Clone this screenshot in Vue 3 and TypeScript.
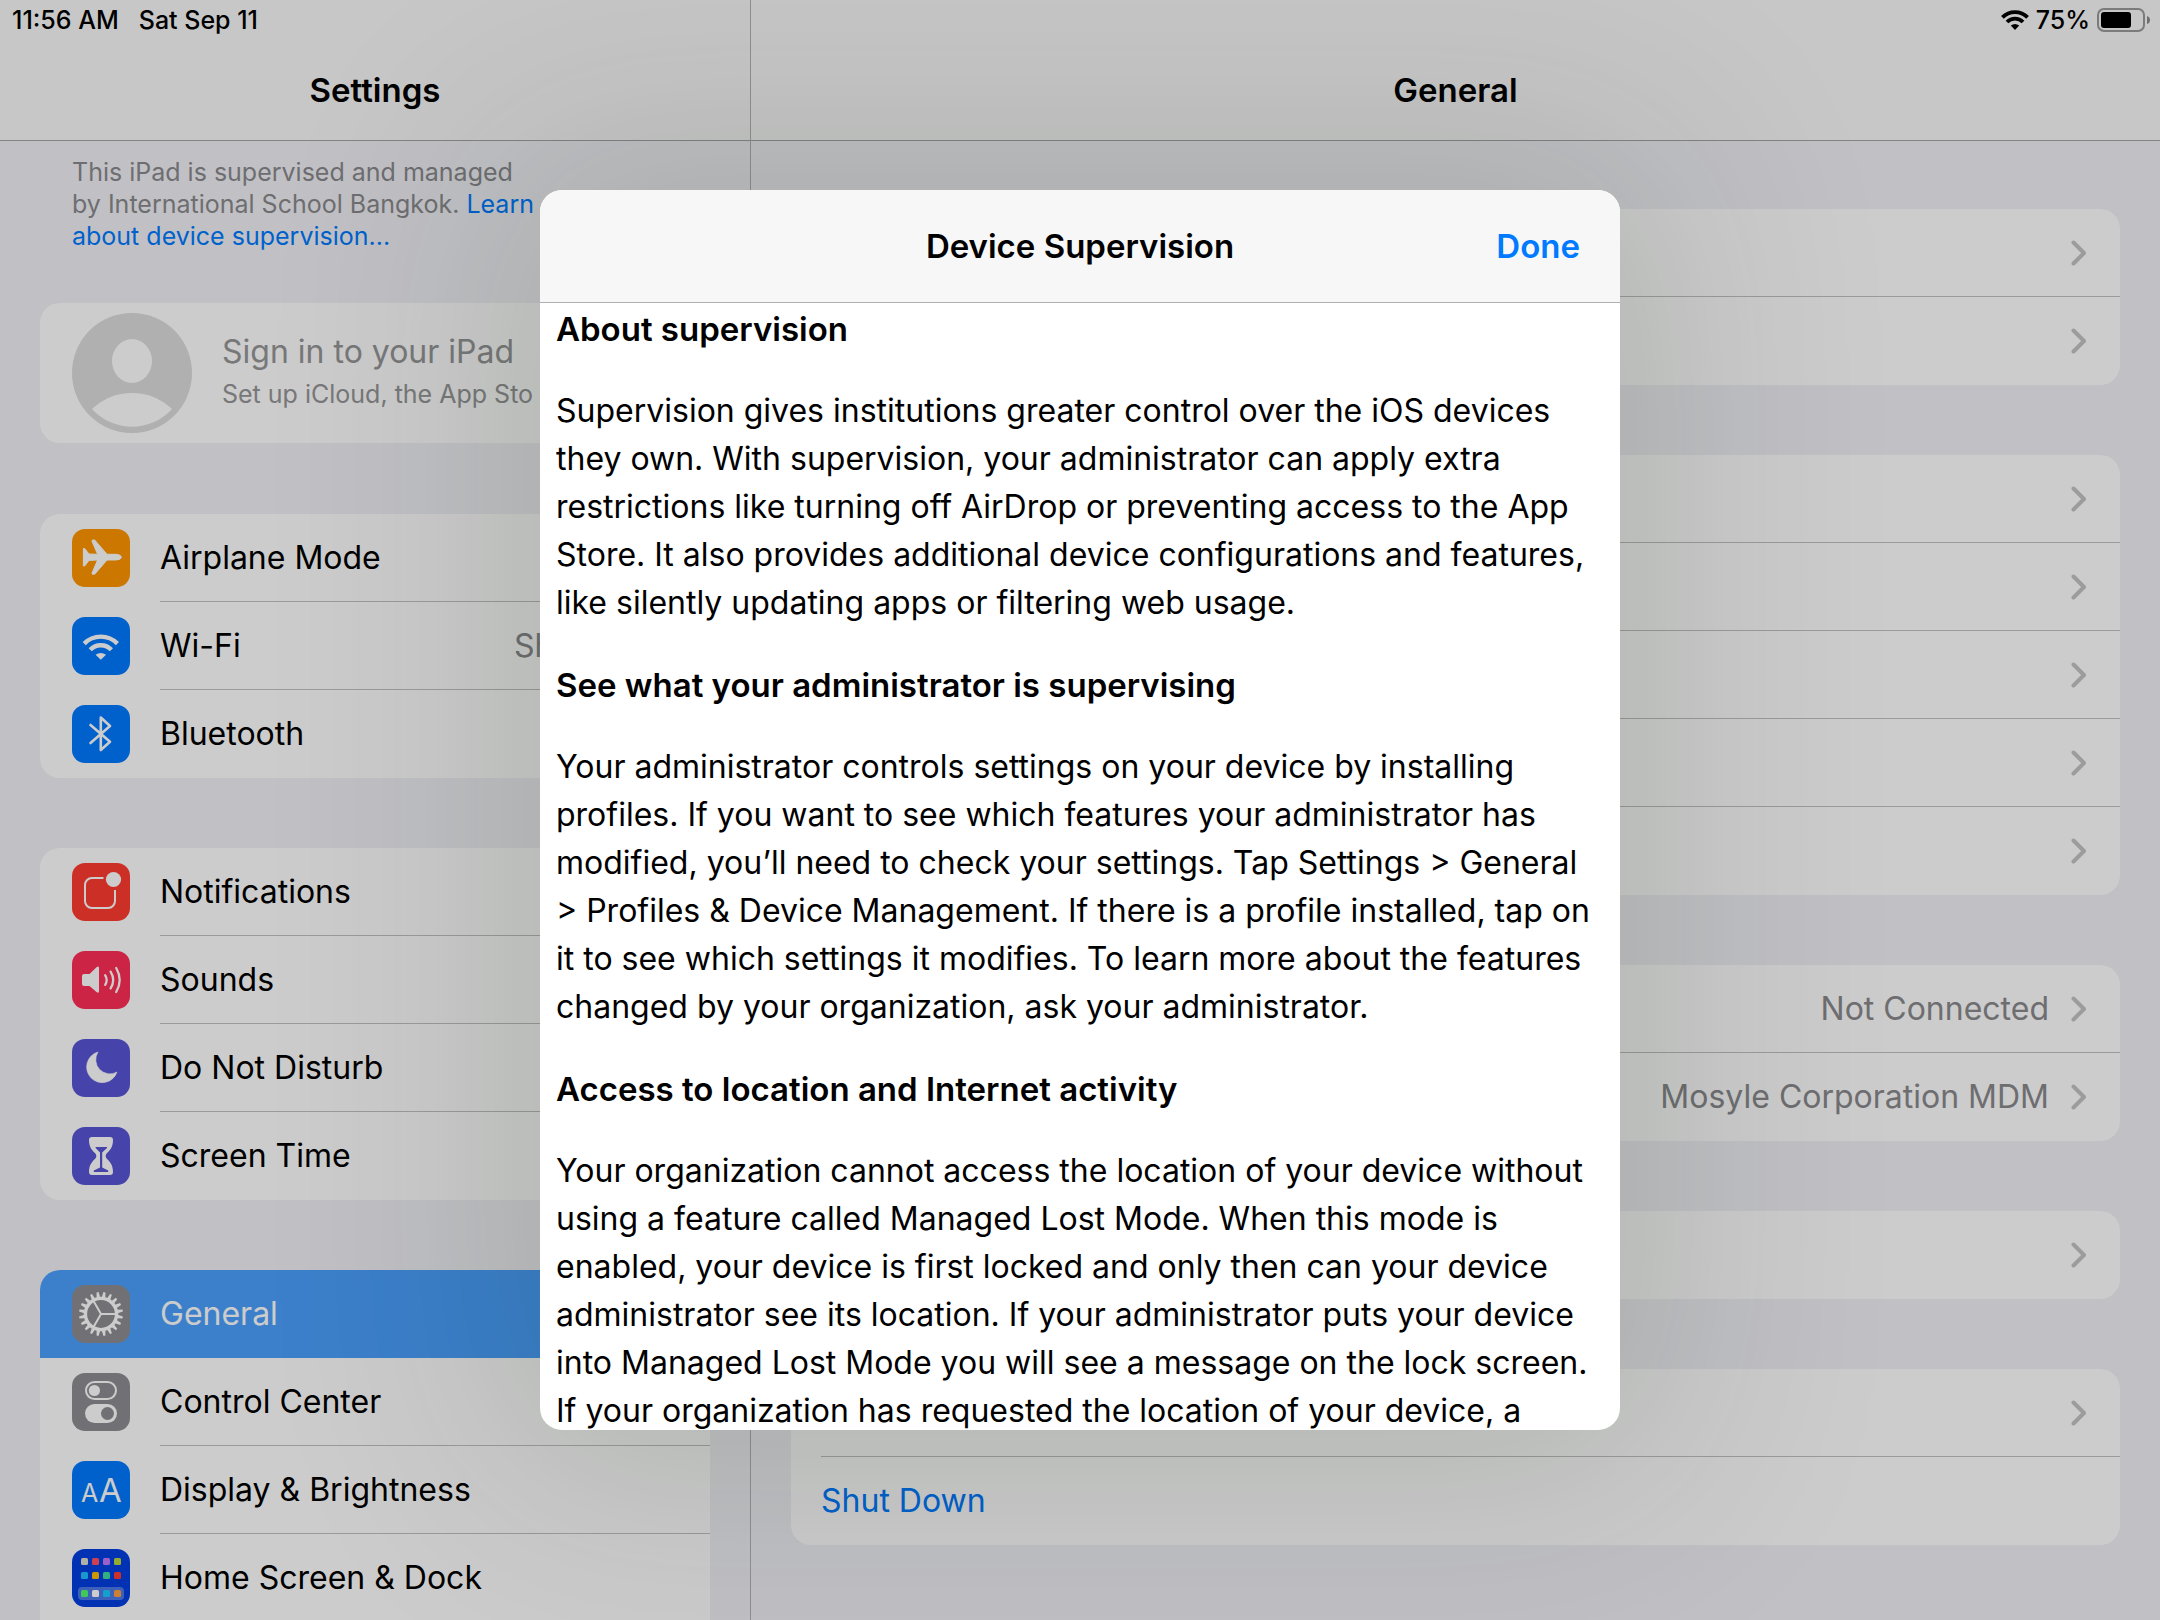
<script setup lang="ts">
interface SidebarItem {
  label: string
  icon: string
  color: string
  value?: string
  selected?: boolean
}

interface DetailRow {
  value?: string
  label?: string
  action?: boolean
}

interface Section {
  title: string
  lines: string[]
}

const sidebarGroups: SidebarItem[][] = [
  [
    { label: 'Airplane Mode', icon: 'airplane', color: '#ff9500' },
    { label: 'Wi-Fi', icon: 'wifi', color: '#007aff', value: 'Sh' },
    { label: 'Bluetooth', icon: 'bluetooth', color: '#007aff' },
  ],
  [
    { label: 'Notifications', icon: 'notifications', color: '#ff3b30' },
    { label: 'Sounds', icon: 'sounds', color: '#ff2d55' },
    { label: 'Do Not Disturb', icon: 'moon', color: '#5856d6' },
    { label: 'Screen Time', icon: 'hourglass', color: '#5856d6' },
  ],
  [
    { label: 'General', icon: 'gear', color: '#8e8e93', selected: true },
    { label: 'Control Center', icon: 'control', color: '#8e8e93' },
    { label: 'Display & Brightness', icon: 'display', color: '#007aff' },
    { label: 'Home Screen & Dock', icon: 'home', color: '#003fe0' },
  ],
]

const detailGroups: DetailRow[][] = [
  [{}, {}],
  [{}, {}, {}, {}, {}],
  [{ value: 'Not Connected' }, { value: 'Mosyle Corporation MDM' }],
  [{}],
  [{}, { label: 'Shut Down', action: true }],
]

const sections: Section[] = [
  {
    title: 'About supervision',
    lines: [
      'Supervision gives institutions greater control over the iOS devices',
      'they own. With supervision, your administrator can apply extra',
      'restrictions like turning off AirDrop or preventing access to the App',
      'Store. It also provides additional device configurations and features,',
      'like silently updating apps or filtering web usage.',
    ],
  },
  {
    title: 'See what your administrator is supervising',
    lines: [
      'Your administrator controls settings on your device by installing',
      'profiles. If you want to see which features your administrator has',
      'modified, you’ll need to check your settings. Tap Settings > General',
      '> Profiles & Device Management. If there is a profile installed, tap on',
      'it to see which settings it modifies. To learn more about the features',
      'changed by your organization, ask your administrator.',
    ],
  },
  {
    title: 'Access to location and Internet activity',
    lines: [
      'Your organization cannot access the location of your device without',
      'using a feature called Managed Lost Mode. When this mode is',
      'enabled, your device is first locked and only then can your device',
      'administrator see its location. If your administrator puts your device',
      'into Managed Lost Mode you will see a message on the lock screen.',
      'If your organization has requested the location of your device, a',
    ],
  },
]

const gearTeeth = Array.from({ length: 20 }, (_, i) => i * 18)

const homeApps = [
  { x: 9, y: 9, fill: '#dcdcd2' },
  { x: 20, y: 9, fill: '#ff5064' },
  { x: 31, y: 9, fill: '#c078ff' },
  { x: 42, y: 9, fill: '#b8d83c' },
  { x: 9, y: 23, fill: '#1ebeff' },
  { x: 20, y: 23, fill: '#ffbf00' },
  { x: 31, y: 23, fill: '#3cdca0' },
  { x: 42, y: 23, fill: '#ff3c32' },
  { x: 9, y: 41, fill: '#50fa6e' },
  { x: 20, y: 41, fill: '#ffffff' },
  { x: 31, y: 41, fill: '#19c8ff' },
  { x: 42, y: 41, fill: '#ffa040' },
]
</script>

<template>
  <div class="screen">
    <aside class="sidebar">
      <header class="bar">
        <div class="status">
          <span>11:56 AM</span>
          <span>Sat Sep 11</span>
        </div>
        <h1 class="bar-title">Settings</h1>
      </header>

      <div class="sidebar-body">
        <p class="supervised">
          This iPad is supervised and managed<br />by International School Bangkok.
          <a href="#supervision">Learn<br />about device supervision...</a>
        </p>

        <a class="card account" href="#account">
          <svg class="avatar" viewBox="0 0 120 120" aria-hidden="true">
            <circle cx="60" cy="60" r="60" fill="#dcdcdc" />
            <ellipse cx="60" cy="48" rx="20" ry="22" fill="#fff" />
            <path d="M20 96Q37 80 60 80Q83 80 100 96A54 54 0 0 1 20 96Z" fill="#fff" />
          </svg>
          <span class="account-text">
            <span class="account-name">Sign in to your iPad</span>
            <span class="account-sub">Set up iCloud, the App Sto</span>
          </span>
        </a>

        <nav v-for="(group, g) in sidebarGroups" :key="g" class="card">
          <a
            v-for="item in group"
            :key="item.label"
            href="#"
            class="row side-row"
            :class="{ selected: item.selected }"
          >
            <svg class="icon" viewBox="0 0 58 58" aria-hidden="true">
              <rect width="58" height="58" rx="13" :fill="item.color" />
              <path
                v-if="item.icon === 'airplane'"
                d="M11.4 19.5H12.6L17 25L25.6 25.3L20 12.2Q19.6 11 21 11H22.7L35 25.3H44Q49.4 25.8 49.4 28.2Q49.4 30.6 44 31H35L22.7 45.2H21Q19.6 45.2 20 44L25.6 31L17 31.4L12.6 37H11.4Z"
                fill="#fff" stroke="#fff" stroke-width="1" stroke-linejoin="round"
              />
              <g v-else-if="item.icon === 'wifi'" fill="none" stroke="#fff" stroke-width="4.4">
                <path d="M12.2 26.6A23.3 23.3 0 0 1 45.4 26.6" />
                <path d="M18.2 32.8A14.7 14.7 0 0 1 39.4 32.8" />
                <path d="M23.6 37.8Q28.8 34 34 37.8L28.8 42.8Z" fill="#fff" stroke="none" />
              </g>
              <path
                v-else-if="item.icon === 'bluetooth'"
                d="M18.5 20L38 36.8L28.8 45V12.5L38 21L18.5 38"
                fill="none" stroke="#fff" stroke-width="2.6" stroke-linecap="round" stroke-linejoin="round"
              />
              <g v-else-if="item.icon === 'notifications'">
                <path
                  d="M31.5 15H20A7 7 0 0 0 13 22V38A7 7 0 0 0 20 45H36A7 7 0 0 0 43 38V27"
                  fill="none" stroke="#fff" stroke-width="2"
                />
                <circle cx="41.5" cy="16.5" r="7.6" fill="#fff" />
              </g>
              <g v-else-if="item.icon === 'sounds'" fill="none" stroke="#fff" stroke-width="2.3" stroke-linecap="round">
                <path
                  d="M12 23H17.5L24.8 16Q27 14.8 27 17V40Q27 42.6 24.8 41.2L17.5 35H12Q10 35 10 33V25Q10 23 12 23Z"
                  fill="#fff" stroke="none"
                />
                <path d="M33.2 24.3Q36.2 29 33.2 33.8" />
                <path d="M38.6 20.6Q43.8 29 38.6 37.4" />
                <path d="M44.2 17Q51.2 29 44.2 41" />
              </g>
              <path
                v-else-if="item.icon === 'moon'"
                d="M26 13A15.6 15.6 0 1 0 45 33A14.2 14.2 0 0 1 26 13Z"
                fill="#fff" stroke="#fff" stroke-width="0.6" stroke-linejoin="round"
              />
              <g v-else-if="item.icon === 'hourglass'">
                <path
                  d="M20 10H38Q41 10 41 13C41 21 37 24 34.2 27Q33 29 34.2 31C37 34 41 37 41 45Q41 48 38 48H20Q17 48 17 45C17 37 21 34 23.8 31Q25 29 23.8 27C21 24 17 21 17 13Q17 10 20 10Z"
                  fill="#fff"
                />
                <path
                  d="M23.6 20H35V21L30.2 25.5V40.6L36.2 43.6V45H21.8V43.6L28 40.6V25.5L23.6 21Z"
                  :fill="item.color"
                />
              </g>
              <g v-else-if="item.icon === 'gear'" fill="#fff">
                <path
                  v-for="angle in gearTeeth"
                  :key="angle"
                  d="M27.2 12.4L28 7H30L30.8 12.4Z"
                  :transform="`rotate(${angle + 9} 29 29)`"
                />
                <circle cx="29" cy="29" r="15.6" fill="none" stroke="#fff" stroke-width="3.4" />
                <path
                  d="M29 29H44M29 29L21.5 16M29 29L21.5 42"
                  stroke="#fff" stroke-width="2"
                />
              </g>
              <g v-else-if="item.icon === 'control'">
                <rect x="14" y="9" width="30" height="17" rx="8.5" fill="none" stroke="#fff" stroke-width="2" />
                <circle cx="22.4" cy="17.5" r="5.6" fill="#fff" />
                <rect x="13" y="31" width="32" height="19" rx="9.5" fill="#fff" />
                <circle cx="35.5" cy="40.5" r="6.5" :fill="item.color" />
              </g>
              <g v-else-if="item.icon === 'display'" fill="#fff">
                <text x="9" y="41" font-size="25">A</text>
                <text x="27" y="41" font-size="33">A</text>
              </g>
              <g v-else-if="item.icon === 'home'">
                <rect x="6" y="38" width="46" height="13" rx="4" fill="#fff" fill-opacity="0.3" />
                <rect
                  v-for="app in homeApps"
                  :key="`${app.x}-${app.y}`"
                  :x="app.x" :y="app.y" width="7" height="7" rx="1.5" :fill="app.fill"
                />
              </g>
            </svg>
            <span class="row-main">
              <span class="row-label">{{ item.label }}</span>
              <span v-if="item.value" class="row-value">{{ item.value }}</span>
            </span>
          </a>
        </nav>
      </div>
    </aside>

    <main class="detail">
      <header class="bar">
        <div class="status status-right">
          <svg class="status-wifi" viewBox="0 0 28 20" aria-hidden="true">
            <g fill="none" stroke="#000" stroke-width="3.8">
              <path d="M1.4 7.4A17.8 17.8 0 0 1 26.6 7.4" />
              <path d="M6 12A11.3 11.3 0 0 1 22 12" />
            </g>
            <path d="M9.8 15.6Q14 12.2 18.2 15.6L14 20Z" />
          </svg>
          <span class="percent">75%</span>
          <svg class="battery" viewBox="0 0 54 24" aria-hidden="true">
            <rect x="1" y="1" width="46" height="22" rx="6" fill="none" stroke="#9a9a9a" stroke-width="2" />
            <rect x="4" y="4" width="30" height="16" rx="3" />
            <path d="M50 8Q53 9 53 12Q53 15 50 16Z" fill="#8c8c8c" />
          </svg>
        </div>
        <h1 class="bar-title">General</h1>
      </header>

      <div class="detail-body">
        <section v-for="(group, g) in detailGroups" :key="g" class="card">
          <component
            :is="row.action ? 'button' : 'a'"
            v-for="(row, r) in group"
            :key="r"
            class="row detail-row"
            :href="row.action ? undefined : '#'"
          >
            <span class="row-main">
              <span v-if="row.label" class="row-label action">{{ row.label }}</span>
              <span v-if="row.value" class="row-value">{{ row.value }}</span>
              <svg v-if="!row.action" class="chevron" viewBox="0 0 16 26" aria-hidden="true">
                <path d="M2.5 2.5L13 13L2.5 23.5" />
              </svg>
            </span>
          </component>
        </section>
      </div>
    </main>

    <div class="backdrop">
      <div class="modal" role="dialog" aria-labelledby="modal-title">
        <header class="modal-bar">
          <h2 id="modal-title" class="modal-title">Device Supervision</h2>
          <button class="done" type="button">Done</button>
        </header>
        <div class="modal-body">
          <template v-for="section in sections" :key="section.title">
            <h3>{{ section.title }}</h3>
            <p><span v-for="line in section.lines" :key="line" class="line">{{ line }}</span></p>
          </template>
        </div>
      </div>
    </div>
  </div>
</template>

<style>
body {
  margin: 0;
  overflow: hidden;
}
</style>

<style scoped>
.screen {
  position: relative;
  display: flex;
  height: 100vh;
  overflow: hidden;
  background: #f2f2f7;
  color: #000;
  font-family: Inter, "Liberation Sans", sans-serif;
  font-size: 32px;
  line-height: 48px;
}

a {
  color: inherit;
  text-decoration: none;
}

h1,
h2,
h3,
p {
  margin: 0;
}

h1,
h2,
h3 {
  font-size: 33px;
  font-weight: 600;
}

.sidebar {
  flex: none;
  width: 750px;
  border-right: 1px solid #b4b4b6;
}

.detail {
  flex: 1;
  min-width: 0;
}

.bar {
  box-sizing: border-box;
  height: 141px;
  border-bottom: 1px solid #a4a4a6;
  background: #f9f9f9;
}

.status {
  display: flex;
  align-items: center;
  gap: 20px;
  height: 40px;
  padding: 0 9px 0 12px;
  font-size: 25px;
  font-weight: 500;
  line-height: 40px;
}

.status-right {
  justify-content: flex-end;
  gap: 7px;
}

.status-wifi {
  width: 28px;
  height: 20px;
}

.battery {
  width: 54px;
  height: 24px;
}

.bar-title {
  height: 100px;
  line-height: 100px;
  text-align: center;
}

.sidebar-body {
  padding: 15px 40px 0;
}

.supervised {
  margin: 0 32px 51px;
  color: #8a8a8e;
  font-size: 25px;
  line-height: 32px;
  white-space: nowrap;
}

.supervised a {
  color: #007aff;
}

.card {
  display: block;
  margin-bottom: 70px;
  border-radius: 20px;
  background: #fff;
  overflow: hidden;
}

.account {
  display: flex;
  align-items: center;
  gap: 30px;
  height: 140px;
  margin-bottom: 71px;
  padding-left: 32px;
  box-sizing: border-box;
}

.avatar {
  flex: none;
  width: 120px;
  height: 120px;
}

.account-text {
  display: flex;
  flex-direction: column;
  padding-bottom: 2px;
  color: #969698;
  white-space: nowrap;
}

.account-name {
  line-height: 44px;
}

.account-sub {
  font-size: 25px;
  line-height: 40px;
}

.row {
  display: flex;
  align-items: center;
  width: 100%;
  height: 88px;
  padding: 0;
  border: 0;
  box-sizing: border-box;
  background: none;
  font: inherit;
  text-align: left;
}

.side-row {
  gap: 30px;
  padding-left: 32px;
}

.detail-row {
  padding-left: 30px;
}

.icon {
  flex: none;
  width: 58px;
  height: 58px;
}

.row-main {
  display: flex;
  flex: 1;
  align-items: center;
  height: 87px;
  border-bottom: 1px solid #c2c2c4;
}

.row:last-child .row-main,
.selected .row-main {
  border-bottom-color: transparent;
}

.row-value {
  margin-left: auto;
  color: #8a8a8e;
}

.side-row .row-value {
  width: 196px;
  white-space: nowrap;
}

.selected {
  background: #4ca1fe;
  color: #fff;
}

.sidebar-body .card:last-child {
  margin-bottom: 0;
  padding-bottom: 40px;
}

.sidebar-body .card:last-child .row:last-child .row-main {
  border-bottom-color: #c2c2c4;
}

.detail-body {
  padding: 68px 40px 0;
}

.action {
  color: #007aff;
}

.chevron {
  width: 16px;
  height: 26px;
  margin: 0 33px 0 auto;
  fill: none;
  stroke: #c4c4c6;
  stroke-width: 4;
  stroke-linecap: round;
  stroke-linejoin: round;
}

.row-value + .chevron {
  margin-left: 22px;
}

.backdrop {
  position: absolute;
  inset: 0;
  display: flex;
  padding: 190px 25%;
  background: rgba(0, 0, 0, 0.2);
}

.modal {
  display: flex;
  flex: 1;
  flex-direction: column;
  min-width: 0;
  border-radius: 22px;
  background: #fff;
  box-shadow: 0 0 230px 60px rgba(0, 35, 10, 0.12);
  overflow: hidden;
}

.modal-bar {
  display: grid;
  grid-template-columns: 1fr auto 1fr;
  align-items: center;
  flex: none;
  height: 112px;
  padding: 0 40px;
  border-bottom: 1px solid #b0b0b2;
  background: #f7f7f7;
}

.modal-title {
  grid-column: 2;
}

.done {
  justify-self: end;
  padding: 0;
  border: 0;
  background: none;
  color: #007aff;
  font: inherit;
  font-size: 33px;
  font-weight: 600;
}

.modal-body {
  flex: 1;
  min-height: 0;
  padding: 2px 16px 0;
  overflow: hidden;
}

.modal-body h3,
.modal-body p {
  margin-bottom: 34px;
}

.modal-body p:last-child {
  margin-bottom: 0;
}

.line {
  display: block;
  white-space: nowrap;
}
</style>
